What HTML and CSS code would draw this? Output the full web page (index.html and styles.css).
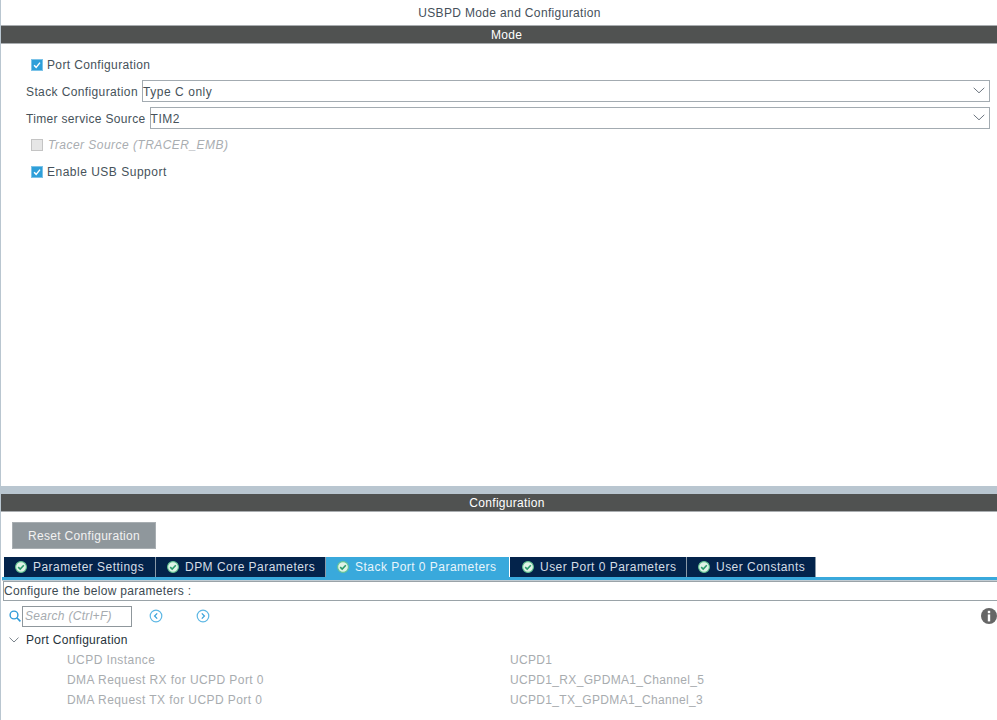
FILE: index.html
```html
<!DOCTYPE html>
<html lang="en">
<head>
<meta charset="utf-8">
<title>USBPD Mode and Configuration</title>
<link rel="stylesheet" href="styles.css">
</head>
<body>
<div class="app">
  <section class="mode">
    <div class="title">USBPD Mode and Configuration</div>
    <div class="bar">Mode</div>
    <div class="mode-form">
      <label class="check-row first"><span class="cb on"><svg viewBox="0 0 12 12"><path d="M2.5 6.2 5 8.8 9.6 3.2" fill="none" stroke="#fff" stroke-width="1.7"/></svg></span>Port Configuration</label>
      <div class="select-row"><span class="sel-label">Stack Configuration</span><div class="select"><span class="sel-value">Type C only</span><svg class="chev" viewBox="0 0 12 7"><path d="M.7.8 6 5.8 11.3.8" fill="none" stroke="#6d7680" stroke-width="1"/></svg></div></div>
      <div class="select-row"><span class="sel-label sel-timer">Timer service Source</span><div class="select"><span class="sel-value">TIM2</span><svg class="chev" viewBox="0 0 12 7"><path d="M.7.8 6 5.8 11.3.8" fill="none" stroke="#6d7680" stroke-width="1"/></svg></div></div>
      <label class="check-row disabled"><span class="cb"></span>Tracer Source (TRACER_EMB)</label>
      <label class="check-row usb"><span class="cb on"><svg viewBox="0 0 12 12"><path d="M2.5 6.2 5 8.8 9.6 3.2" fill="none" stroke="#fff" stroke-width="1.7"/></svg></span>Enable USB Support</label>
    </div>
  </section>
  <div class="splitter"></div>
  <section class="config">
    <div class="bar bar-config">Configuration</div>
    <button class="reset">Reset Configuration</button>
    <div class="tabs">
      <div class="tab t1"><svg class="ok" viewBox="0 0 12 12"><circle cx="6" cy="6" r="5.4" fill="#dff3e6" stroke="#63c592" stroke-width="1.1"/><path d="M3.2 6.1 5.2 8 8.8 4.2" fill="none" stroke="#2a9a6c" stroke-width="1.6"/></svg>Parameter Settings</div>
      <div class="tab t2"><svg class="ok" viewBox="0 0 12 12"><circle cx="6" cy="6" r="5.4" fill="#dff3e6" stroke="#63c592" stroke-width="1.1"/><path d="M3.2 6.1 5.2 8 8.8 4.2" fill="none" stroke="#2a9a6c" stroke-width="1.6"/></svg>DPM Core Parameters</div>
      <div class="tab t3 active"><svg class="ok" viewBox="0 0 12 12"><circle cx="6" cy="6" r="5.4" fill="#dff3e6" stroke="#63c592" stroke-width="1.1"/><path d="M3.2 6.1 5.2 8 8.8 4.2" fill="none" stroke="#2a9a6c" stroke-width="1.6"/></svg>Stack Port 0 Parameters</div>
      <div class="tab t4"><svg class="ok" viewBox="0 0 12 12"><circle cx="6" cy="6" r="5.4" fill="#dff3e6" stroke="#63c592" stroke-width="1.1"/><path d="M3.2 6.1 5.2 8 8.8 4.2" fill="none" stroke="#2a9a6c" stroke-width="1.6"/></svg>User Port 0 Parameters</div>
      <div class="tab t5"><svg class="ok" viewBox="0 0 12 12"><circle cx="6" cy="6" r="5.4" fill="#dff3e6" stroke="#63c592" stroke-width="1.1"/><path d="M3.2 6.1 5.2 8 8.8 4.2" fill="none" stroke="#2a9a6c" stroke-width="1.6"/></svg>User Constants</div>
    </div>
    <div class="tab-rule"></div>
    <div class="hint">Configure the below parameters :</div>
    <div class="search-row">
      <svg class="mag" viewBox="0 0 12 12"><circle cx="5" cy="5" r="3.9" fill="none" stroke="#2f9bd8" stroke-width="1.4"/><path d="M7.8 7.8 11.4 11.4" stroke="#2f9bd8" stroke-width="1.6"/></svg>
      <div class="search">Search (Ctrl+F)</div>
      <svg class="nav nav-prev" viewBox="0 0 14 14"><circle cx="7" cy="7" r="5.8" fill="none" stroke="#5db7e4" stroke-width="1.2"/><path d="M8.2 4.4 5.6 7 8.2 9.6" fill="none" stroke="#3ba3dc" stroke-width="1.3"/></svg>
      <svg class="nav nav-next" viewBox="0 0 14 14"><circle cx="7" cy="7" r="5.8" fill="none" stroke="#5db7e4" stroke-width="1.2"/><path d="M5.8 4.4 8.4 7 5.8 9.6" fill="none" stroke="#3ba3dc" stroke-width="1.3"/></svg>
      <svg class="info" viewBox="0 0 16 16"><circle cx="8" cy="8" r="8" fill="#666"/><rect x="6.8" y="2.8" width="2.4" height="2.4" fill="#fff"/><rect x="6.8" y="6.4" width="2.4" height="7" fill="#fff"/></svg>
    </div>
    <div class="group"><svg class="tree-chev" viewBox="0 0 10 6"><path d="M.5.6 5 5 9.5.6" fill="none" stroke="#7b848c" stroke-width="1"/></svg>Port Configuration</div>
    <div class="params">
      <div class="param"><span>UCPD Instance</span><span>UCPD1</span></div>
      <div class="param"><span>DMA Request RX for UCPD Port 0</span><span>UCPD1_RX_GPDMA1_Channel_5</span></div>
      <div class="param"><span>DMA Request TX for UCPD Port 0</span><span>UCPD1_TX_GPDMA1_Channel_3</span></div>
    </div>
  </section>
</div>
</body>
</html>
```
FILE: styles.css
```css
* { box-sizing: border-box; }
html, body { margin: 0; height: 720px; overflow: hidden; background: #fff; }
body { font: 12px/14px "Liberation Sans", Arial, sans-serif; color: #3c4a52; letter-spacing: .3px; }
.app { height: 720px; display: flex; flex-direction: column; border-left: 1px solid #b9c6d0; }
.mode { height: 486px; flex: none; }
.title { height: 25px; line-height: 26px; text-align: center; padding-left: 21px; color: #46505a; letter-spacing: .35px; }
.bar { height: 19px; line-height: 18px; background: #505251; color: #fff; text-align: center; border-top: 1px solid #a9adb0; border-bottom: 1px solid #a9adb0; padding-left: 15px; }
.mode-form { padding: 6px 7px 0 25px; display: flex; flex-direction: column; }
.check-row { height: 27px; display: flex; align-items: center; gap: 4px; padding-left: 5px; color: #46525a; letter-spacing: .4px; }
.check-row.first { padding-top: 2px; letter-spacing: .37px; }
.check-row.usb { letter-spacing: .5px; }
.check-row.disabled { color: #a9adb1; font-style: italic; letter-spacing: .46px; gap: 5px; }
.cb { width: 12px; height: 12px; flex: none; background: #e6e6e6; border: 1px solid #c4c4c4; display: block; }
.cb.on { background: #2e9fd9; border-color: #7cc3e8; }
.cb svg { display: block; width: 10px; height: 10px; }
.select-row { height: 27px; display: flex; align-items: center; gap: 4px; }
.sel-label { white-space: nowrap; color: #46525a; letter-spacing: .38px; padding-top: 2px; }
.sel-timer { letter-spacing: .33px; }
.select { flex: 1; height: 22px; border: 1px solid #a3abb1; display: flex; align-items: center; justify-content: space-between; padding: 0 3px 0 0; color: #46525a; background: #fff; letter-spacing: .55px; }
.sel-value { padding-top: 2px; }
.chev { width: 12px; height: 7px; margin-right: 1px; }
.splitter { height: 8px; flex: none; background: #b9c6d0; }
.config { flex: 1; display: flex; flex-direction: column; min-height: 0; }
.bar-config { height: 18px; border-top: 0; padding-left: 16px; line-height: 18px; flex: none; }
.reset { align-self: flex-start; margin: 10px 0 0 11px; width: 144px; height: 27px; background: #8f979c; border: 1px solid #a8aeb2; color: #f2f2f2; font: inherit; letter-spacing: .32px; padding: 1px 0 0; }
.tabs { display: flex; margin: 8px 0 0 3px; height: 20px; }
.tab { display: flex; align-items: center; height: 20px; background: #03234b; color: #d4dde6; border-right: 1px solid #8a99a8; white-space: nowrap; letter-spacing: .47px; padding-left: 11px; gap: 6px; }
.tab.active { background: #39a9dc; color: #e8f5fb; border-right: 1px solid #fff; }
.t1 { width: 152px; }
.t2 { width: 170px; }
.t3 { width: 184px; }
.t4 { width: 177px; padding-left: 12px; }
.t5 { width: 129px; }
.ok { width: 12px; height: 12px; flex: none; }
.tab-rule { height: 4px; margin-left: 1px; flex: none; background: #39a9dc; border-bottom: 1px solid #c3cdd4; }
.hint { height: 20px; line-height: 18px; margin: 0 0 0 2px; border: 1px solid #9aa3a8; border-right: 0; color: #3c4a52; flex: none; padding-left: 0; letter-spacing: .31px; }
.search-row { display: flex; align-items: center; height: 22px; margin-top: 4px; position: relative; flex: none; padding-left: 8px; }
.mag { width: 12px; height: 12px; flex: none; }
.search { width: 110px; height: 21px; border: 1px solid #8f979c; margin-left: 1px; padding-left: 2px; line-height: 19px; color: #a6abaf; font-style: italic; letter-spacing: .3px; }
.nav { width: 14px; height: 14px; flex: none; }
.nav-prev { margin-left: 17px; }
.nav-next { margin-left: 33px; }
.info { width: 16px; height: 16px; margin-left: auto; margin-right: 0; }
.group { display: flex; align-items: center; height: 20px; margin-top: 3px; padding-left: 8px; color: #26323a; letter-spacing: .28px; }
.tree-chev { width: 10px; height: 6px; margin-right: 7px; flex: none; }
.params { padding-left: 66px; }
.param { height: 20px; display: flex; align-items: center; color: #a8acaf; letter-spacing: .33px; }
.param span:first-child { width: 443px; flex: none; letter-spacing: .43px; }
```
